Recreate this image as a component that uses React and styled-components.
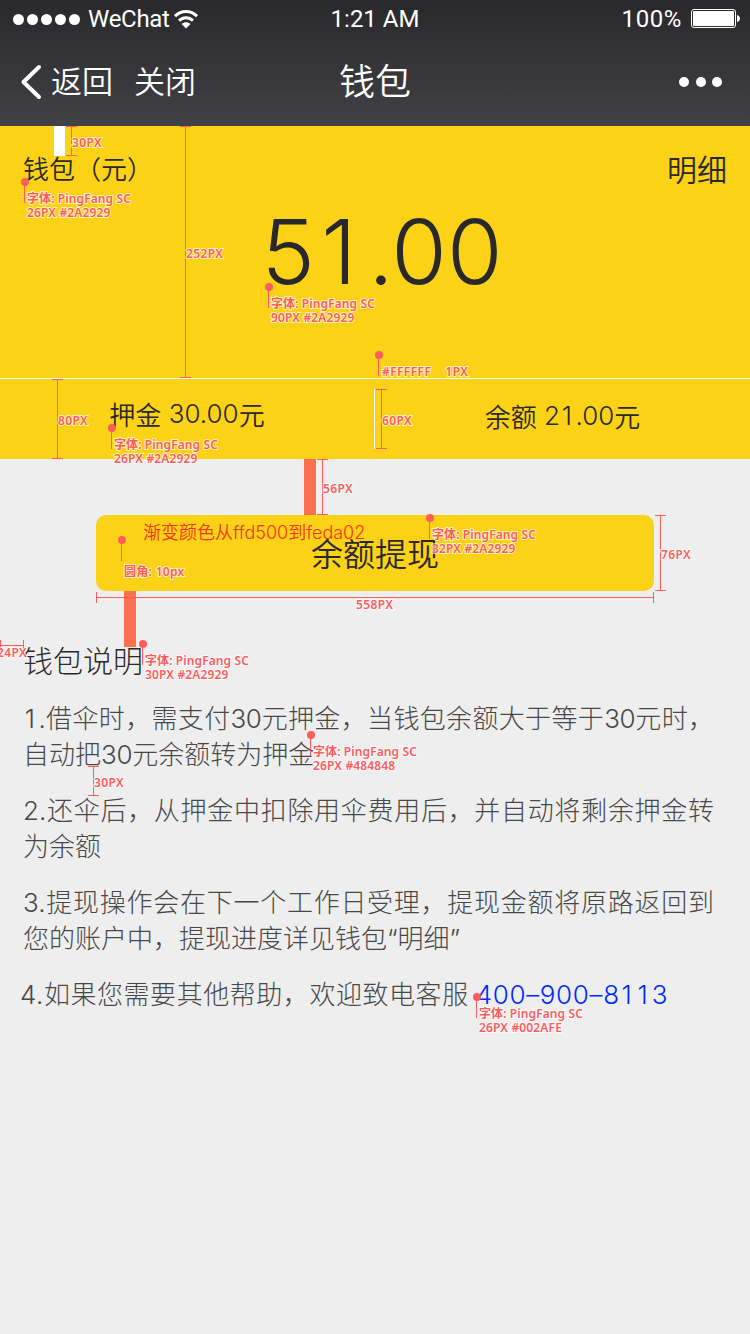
import React from "react";
import styled, { createGlobalStyle, css } from "styled-components";

const INK = "#2a2929";
const MARK = "#ff5c5c";
const YELLOW = "#fcd216";

const GlobalStyle = createGlobalStyle`
  * { box-sizing: border-box; }
  body {
    margin: 0;
    background: #eeeeee;
    font-family: Inter, "Noto Sans CJK SC", sans-serif;
    color: ${INK};
  }
`;

const Page = styled.div`
  position: relative;
  width: 750px;
  height: 1334px;
  overflow: hidden;
  background: #eeeeee;
`;

const Header = styled.header`
  height: 126px;
  color: #fff;
  background: linear-gradient(#29292b, #414146);
`;

const StatusBar = styled.div`
  display: grid;
  grid-template-columns: 1fr auto 1fr;
  align-items: center;
  height: 38px;
  padding: 0 10px 0 13px;
  font-family: Roboto, sans-serif;
  font-size: 24px;
  line-height: 38px;
`;

const StatusGroup = styled.div`
  display: flex;
  align-items: center;
  justify-content: ${(p) => (p.$end ? "flex-end" : "flex-start")};
`;

const StatusText = styled.span`
  letter-spacing: ${(p) => p.$track || 0}px;
`;

const Clock = styled.time`
  padding-right: 3px;
`;

const Signal = styled.div`
  display: flex;
  gap: 3px;
  margin-right: 8px;
`;

const Dot = styled.i`
  width: ${(p) => p.$size}px;
  height: ${(p) => p.$size}px;
  border-radius: 50%;
  background: #fff;
`;

const NavBar = styled.nav`
  display: grid;
  grid-template-columns: 1fr auto 1fr;
  align-items: center;
  height: 88px;
  padding: 0 28px 0 20px;
`;

const NavActions = styled.div`
  display: flex;
  align-items: center;
  font-size: 31px;
  line-height: 40px;
  font-weight: 350;
`;

const BackLabel = styled.span`
  margin: 0 21px 0 9px;
`;

const Title = styled.h1`
  margin: 0;
  padding-left: 8px;
  font-size: 36px;
  line-height: 50px;
  font-weight: 350;
`;

const More = styled.div`
  display: flex;
  justify-content: flex-end;
  gap: 6.5px;
`;

const Hero = styled.section`
  height: 253px;
  padding: 22px 23px 0;
  background: ${YELLOW};
  border-bottom: 1px solid #fff;
`;

const HeroTop = styled.div`
  display: flex;
  justify-content: space-between;
  align-items: center;
  height: 40px;
  line-height: 40px;
  font-family: "Noto Sans CJK SC", sans-serif;
  font-weight: 350;
`;

const WalletLabel = styled.span`
  font-size: 26px;
`;

const Details = styled.a`
  font-size: 30px;
`;

const Figure = styled.span`
  letter-spacing: ${(p) => p.$track || 0}em;
`;

const One = styled.span`
  padding: 0 0.13em 0 0.07em;
`;

const Amount = styled.div`
  margin-top: 13px;
  padding-left: 14px;
  text-align: center;
  font-size: 90px;
  font-weight: 350;
  line-height: 102px;
`;

const Stats = styled.section`
  display: grid;
  grid-template-columns: 375px 375px;
  align-items: center;
  height: 80px;
  background: ${YELLOW};
`;

const Stat = styled.div`
  display: flex;
  align-items: center;
  justify-content: center;
  height: 60px;
  padding-bottom: ${(p) => (p.$raised ? 12 : 8)}px;
  border-right: ${(p) => (p.$raised ? "1px solid #fff" : "0")};
  font-size: 26px;
  font-weight: 350;
  white-space: pre;
`;

const Withdraw = styled.button`
  display: block;
  width: 558px;
  height: 76px;
  margin: 56px auto 0;
  padding: 3px 0 0;
  border: 0;
  border-radius: 10px;
  background: ${YELLOW};
  color: ${INK};
  font: 350 32px/73px Inter, "Noto Sans CJK SC", sans-serif;
`;

const Guide = styled.section`
  padding: 50px 24px 0 23px;
  font-weight: 300;
`;

const GuideTitle = styled.h2`
  margin: 0 0 20px;
  font-size: 30px;
  line-height: 40px;
  font-weight: 300;
`;

const Rule = styled.p`
  margin: 0 0 20px;
  width: 691px;
  font-size: 26px;
  line-height: 36px;
  color: #484848;
`;

const Line = styled.span`
  display: block;
  white-space: nowrap;
  letter-spacing: ${(p) => p.$track || 0}px;
  ${(p) =>
    p.$full &&
    css`
      text-align: justify;
      text-align-last: justify;
      white-space: normal;
    `}
  margin-left: ${(p) => p.$shift || 0}px;
`;

const Phone = styled.a`
  margin-left: 7px;
  color: #002afe;
`;

const Overlay = styled.div`
  position: absolute;
  inset: 0;
  pointer-events: none;
`;

const Block = styled.div`
  position: absolute;
  left: ${(p) => p.$x}px;
  top: ${(p) => p.$y}px;
  width: ${(p) => p.$w}px;
  height: ${(p) => p.$h}px;
  background: ${(p) => p.$color};
`;

const VerticalMeasure = styled.div`
  position: absolute;
  left: ${(p) => p.$x - 5}px;
  top: ${(p) => p.$y}px;
  width: 11px;
  height: ${(p) => p.$len}px;
  border: solid ${MARK};
  border-width: 1px 0;
  background: linear-gradient(${MARK}, ${MARK}) 5px 0 / 1px 100% no-repeat;
`;

const HorizontalMeasure = styled.div`
  position: absolute;
  left: ${(p) => p.$x}px;
  top: ${(p) => p.$y - 5}px;
  width: ${(p) => p.$len}px;
  height: 11px;
  border: solid ${MARK};
  border-width: 0 1px;
  background: linear-gradient(${MARK}, ${MARK}) 0 5px / 100% 1px no-repeat;
`;

const Note = styled.div`
  position: absolute;
  left: ${(p) => p.$x}px;
  top: ${(p) => p.$y}px;
  color: ${MARK};
  font: 600 12px/14px "Noto Sans", "Noto Sans CJK SC", sans-serif;
  letter-spacing: ${(p) => p.$track ?? 0.4}px;
  white-space: pre;
  -webkit-text-stroke: 2px rgba(255, 255, 255, 0.7);
  paint-order: stroke fill;
`;

const NoteLine = styled.div`
  width: max-content;
  letter-spacing: ${(p) => p.$track || 0}px;
`;

const PinMark = styled.div`
  position: absolute;
  left: ${(p) => p.$x - 4}px;
  top: ${(p) => p.$y - 4}px;
  width: 8px;
  height: 8px;
  border-radius: 50%;
  background: ${MARK};
  &::after {
    content: "";
    position: absolute;
    left: 3px;
    top: 4px;
    width: 1px;
    height: 21px;
    background: ${MARK};
  }
`;

const GradientNote = styled.div`
  position: absolute;
  left: 143px;
  top: 521px;
  color: #f5321c;
  font-size: 18px;
  font-weight: 350;
  line-height: 24px;
  white-space: nowrap;
`;

function WifiIcon() {
  return (
    <svg width="24" height="19" viewBox="0 0 24 19" style={{ marginLeft: 4 }} fill="none" stroke="#fff">
      <path d="M1 6.2C7.500 0 16.500 0 23 6.200" strokeWidth="3" />
      <path d="M5 10.600C9 6.700 15 6.700 19 10.600" strokeWidth="2.900" />
      <path d="M7.500 14C10.200 11.500 13.800 11.500 16.500 14L12 18.500Z" fill="#fff" stroke="none" />
    </svg>
  );
}

function BatteryIcon() {
  return (
    <svg width="49" height="19" viewBox="0 0 49 19" style={{ marginLeft: 9, marginTop: -1 }}>
      <rect x=".5" y=".5" width="44" height="18" rx="2.500" fill="none" stroke="#fff" />
      <rect x="2" y="2" width="41" height="15" rx="1" fill="#fff" />
      <path d="M46 6C50 7 50 12 46 13Z" fill="#fff" />
    </svg>
  );
}

function BackIcon() {
  return (
    <svg width="22" height="36" viewBox="0 0 22 36" fill="none" stroke="#fff" strokeWidth="4" strokeLinecap="round" strokeLinejoin="round">
      <path d="M19 3L3.500 18L19 33" />
    </svg>
  );
}

function Digits({ children, track }) {
  return (
    <Figure $track={track}>
      {children.split(/(1)/).map((part, i) => (part === "1" ? <One key={i}>1</One> : part))}
    </Figure>
  );
}

function Pin({ x, y, size, color }) {
  return (
    <>
      <PinMark $x={x} $y={y} />
      <Note $x={x + 2} $y={y + 10}>
        <NoteLine $track={0.1}>字体: PingFang SC</NoteLine>
        <NoteLine $track={0.15}>{size + "PX " + color}</NoteLine>
      </Note>
    </>
  );
}

const heights = [
  [71, 126, 30, "30PX", 136],
  [185, 126, 252, "252PX", 247],
  [57, 379, 80, "80PX", 414],
  [381, 389, 60, "60PX", 414],
  [322, 459, 56, "56PX", 482],
  [660, 515, 76, "76PX", 548],
  [93, 766, 30, "30PX", 776],
];

const pins = [
  [25, 182, 26, "#2A2929"],
  [269, 287, 90, "#2A2929"],
  [112, 428, 26, "#2A2929"],
  [430, 518, 32, "#2A2929"],
  [143, 644, 30, "#2A2929"],
  [311, 735, 26, "#484848"],
  [477, 997, 26, "#002AFE"],
];

function Annotations() {
  return (
    <Overlay>
      <Block $x={54} $y={126} $w={11} $h={30} $color="#fff" />
      <Block $x={304} $y={459} $w={12} $h={56} $color="#fb714f" />
      <Block $x={124} $y={591} $w={12} $h={56} $color="#fb714f" />
      {heights.map(([x, y, len, text, noteY]) => (
        <React.Fragment key={x}>
          <VerticalMeasure $x={x} $y={y} $len={len} />
          <Note $x={x + 1} $y={noteY}>{text}</Note>
        </React.Fragment>
      ))}
      <HorizontalMeasure $x={96} $y={597} $len={558} />
      <Note $x={356} $y={598}>558PX</Note>
      <HorizontalMeasure $x={0} $y={645} $len={24} />
      <Note $x={-3} $y={646}>24PX</Note>
      {pins.map(([x, y, size, color]) => (
        <Pin key={x} x={x} y={y} size={size} color={color} />
      ))}
      <PinMark $x={379} $y={355} />
      <Note $x={382} $y={365}>{"#FFFFFF    1PX"}</Note>
      <PinMark $x={122} $y={540} />
      <Note $x={124} $y={565} $track={0.3}>圆角: 10px</Note>
      <GradientNote>渐变颜色从ffd500到feda02</GradientNote>
    </Overlay>
  );
}

export default function App() {
  return (
    <Page lang="zh-CN">
      <GlobalStyle />
      <Header>
        <StatusBar>
          <StatusGroup>
            <Signal>
              {[0, 1, 2, 3, 4].map((i) => (
                <Dot key={i} $size={11} />
              ))}
            </Signal>
            <StatusText $track={-0.3}>WeChat</StatusText>
            <WifiIcon />
          </StatusGroup>
          <Clock>1:21 AM</Clock>
          <StatusGroup $end>
            <StatusText $track={0.6}>100%</StatusText>
            <BatteryIcon />
          </StatusGroup>
        </StatusBar>
        <NavBar>
          <NavActions>
            <BackIcon />
            <BackLabel>返回</BackLabel>
            <span>关闭</span>
          </NavActions>
          <Title>钱包</Title>
          <More>
            <Dot $size={10} />
            <Dot $size={10} />
            <Dot $size={10} />
          </More>
        </NavBar>
      </Header>
      <Hero>
        <HeroTop>
          <WalletLabel>钱包（元）</WalletLabel>
          <Details>明细</Details>
        </HeroTop>
        <Amount><Digits>51.00</Digits></Amount>
      </Hero>
      <Stats>
        <Stat $raised>押金 <Digits>30.00</Digits>元</Stat>
        <Stat>余额 <Digits>21.00</Digits>元</Stat>
      </Stats>
      <Withdraw>余额提现</Withdraw>
      <Guide>
        <GuideTitle>钱包说明</GuideTitle>
        <Rule>
          <Line $full><Digits>1.</Digits>借伞时，需支付<Digits track={-0.02}>30</Digits>元押金，当钱包余额大于等于<Digits track={-0.02}>30</Digits>元时，</Line>
          <Line>自动把<Digits track={-0.01}>30</Digits>元余额转为押金</Line>
        </Rule>
        <Rule>
          <Line $full>2.还伞后，从押金中扣除用伞费用后，并自动将剩余押金转</Line>
          <Line>为余额</Line>
        </Rule>
        <Rule>
          <Line $full>3.提现操作会在下一个工作日受理，提现金额将原路返回到</Line>
          <Line>您的账户中，提现进度详见钱包“明细”</Line>
        </Rule>
        <Rule>
          <Line $shift={-3} $track={0.55}>
            4.如果您需要其他帮助，欢迎致电客服<Phone><Digits track={0.025}>400–900–8113</Digits></Phone>
          </Line>
        </Rule>
      </Guide>
      <Annotations />
    </Page>
  );
}
